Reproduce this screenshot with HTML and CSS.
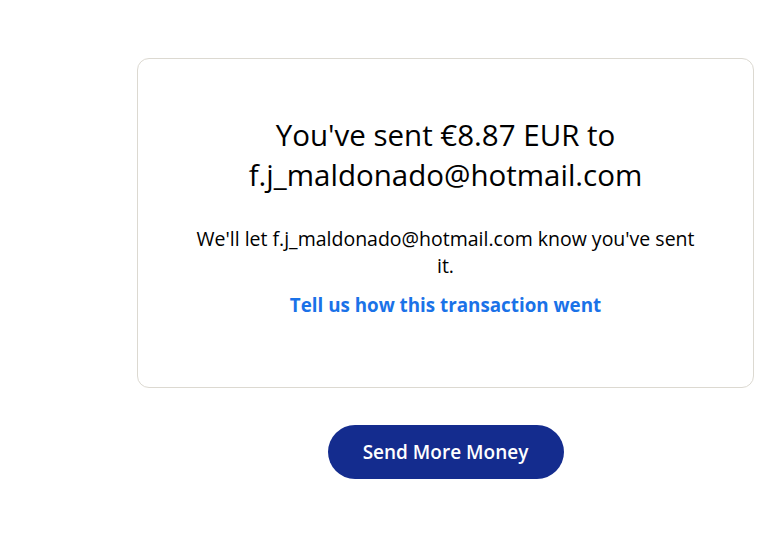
FILE: index.html
```html
<!DOCTYPE html>
<html lang="en">
<head>
<meta charset="utf-8">
<title>Sent</title>
<link rel="stylesheet" href="styles.css">
</head>
<body>
<main class="page">
  <section class="card">
    <h1 class="title">You've sent €8.87 EUR to f.j_maldonado@hotmail.com</h1>
    <p class="note">We'll let f.j_maldonado@hotmail.com know you've sent it.</p>
    <a class="link" href="#">Tell us how this transaction went</a>
  </section>
  <div class="actions">
    <a class="btn" href="#">Send More Money</a>
  </div>
</main>
</body>
</html>
```
FILE: styles.css
```css
html, body {
  margin: 0;
  padding: 0;
  background: #ffffff;
}
body {
  font-family: "Open Sans", "Noto Sans", sans-serif;
  color: #000000;
}
.page {
  padding: 58px 11px 0 137px;
  display: flex;
  flex-direction: column;
}
.card {
  box-sizing: border-box;
  height: 330px;
  border: 1px solid #dcd9d1;
  border-radius: 12px;
  padding: 56px 48px 0;
  display: flex;
  flex-direction: column;
  align-items: center;
  text-align: center;
}
.title {
  margin: 0;
  font-size: 29.5px;
  font-weight: 400;
  line-height: 40px;
  max-width: 440px;
}
.note {
  margin: 30px 0 0;
  font-size: 19.5px;
  line-height: 27px;
  max-width: 510px;
}
.link {
  margin-top: 13px;
  font-size: 18.8px;
  line-height: 27px;
  font-weight: 700;
  color: #1a72e8;
  text-decoration: none;
}
.actions {
  display: flex;
  justify-content: center;
  margin-top: 37px;
}
.btn {
  width: 236px;
  height: 54px;
  border-radius: 27px;
  background: #142c8e;
  color: #ffffff;
  text-decoration: none;
  font-size: 19px;
  font-weight: 600;
  display: flex;
  align-items: center;
  justify-content: center;
}
```
